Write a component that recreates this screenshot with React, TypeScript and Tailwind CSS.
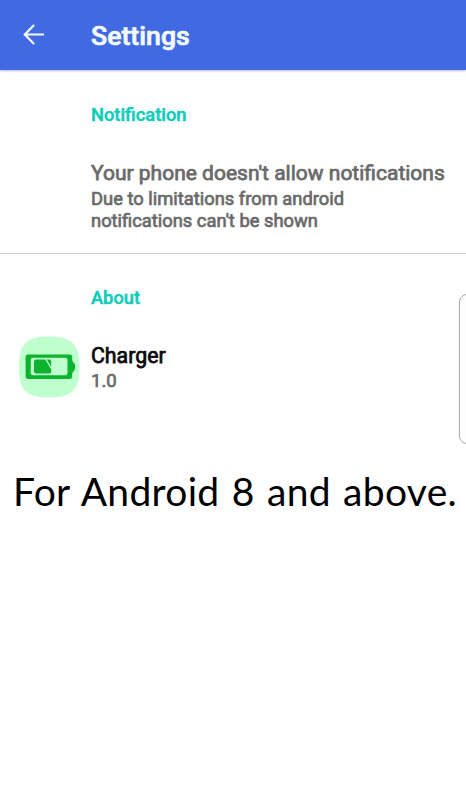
function BackArrow() {
  return (
    <svg viewBox="0 0 22 22" className="h-[22px] w-[22px]" fill="none" stroke="#f4fbff" strokeWidth="2.2">
      <path d="M21 10.5H2.5M11.1 1.1 1.8 10.5l9.3 9.4" />
    </svg>
  )
}

function BatteryIcon() {
  return (
    <svg viewBox="0 0 62 62" className="h-[62px] w-[62px]">
      <path
        d="M31 .5C54 .5 61.5 8 61.5 31S54 61.5 31 61.5.8 54 .8 31 8 .5 31 .5Z"
        fill="#c0ffce"
      />
      <path
        fillRule="evenodd"
        fill="#0cb32e"
        d="M10 18.6H51.8q2.4 0 2.4 2.4v3.4l2.8 4.2v4.4l-2.8 4.2v3.4q0 2.4-2.4 2.4H10q-2.4 0-2.4-2.4V21q0-2.4 2.4-2.4ZM15 21.8q-2.3 0-2.3 2.3v12.8q0 2.3 2.3 2.3h32.2q2.3 0 2.3-2.3V24.1q0-2.3-2.3-2.3Z"
      />
      <path fill="#0cb32e" d="M18 23.4h9.2l6 10v2.2q0 2-2 2H18q-2 0-2-2V25.4q0-2 2-2Z" />
      <path fill="#0cb32e" d="M28.7 23.4h2.500q2 0 2 2v5.400Z" />
    </svg>
  )
}

export default function App() {
  return (
    <div className="relative h-[800px] w-[466px] overflow-hidden bg-white font-['Roboto',sans-serif]">
      <header className="flex h-[70px] items-center bg-[#4169e1] pl-[23px] shadow-[0_1px_2px_rgba(70,90,170,0.4)]">
        <BackArrow />
        <h1 className="mt-[2px] ml-[46px] text-[26.7px] leading-8 font-medium text-[#f4fbff] [-webkit-text-stroke:0.7px]">
          Settings
        </h1>
      </header>

      <section className="h-[184px] border-b border-[#d2d2d2] pt-[33px] pl-[91px] whitespace-nowrap">
        <h2 className="text-[18.3px] leading-6 font-medium text-[#0dccb9] [-webkit-text-stroke:0.5px]">Notification</h2>
        <p className="mt-[33px] text-[21px] leading-[26px] text-[#6a6a6a] [-webkit-text-stroke:0.75px]">
          Your phone doesn't allow notifications
        </p>
        <p className="mt-[2px] text-[18.35px] leading-[22px] text-[#6a6a6a] [-webkit-text-stroke:0.7px]">
          Due to limitations from android
          <br />
          notifications can't be shown
        </p>
      </section>

      <section className="pt-[32px]">
        <h2 className="pl-[91px] text-[18.3px] leading-6 font-medium text-[#0dccb9] [-webkit-text-stroke:0.5px]">About</h2>
        <div className="mt-[26px] flex items-start pl-[18px]">
          <BatteryIcon />
          <div className="mt-[7px] ml-[11px]">
            <p className="text-[21.3px] leading-[26px] text-[#0b0b0b] [-webkit-text-stroke:0.75px]">Charger</p>
            <p className="text-[18.5px] leading-6 text-[#6a6a6a] [-webkit-text-stroke:0.7px]">1.0</p>
          </div>
        </div>
      </section>

      <p className="mt-[68px] pl-[13px] font-['Lato',sans-serif] text-[39px] leading-[50px] tracking-[0.3px] whitespace-nowrap text-black [word-spacing:2px]">
        For Android 8 and above.
      </p>

      {/* edge panel handle, mostly off screen */}
      <div className="absolute top-[294px] left-[459px] h-[150px] w-[20px] rounded-[8px] border border-[#aaaaaa] bg-[#fdfdfd]" />
    </div>
  )
}
